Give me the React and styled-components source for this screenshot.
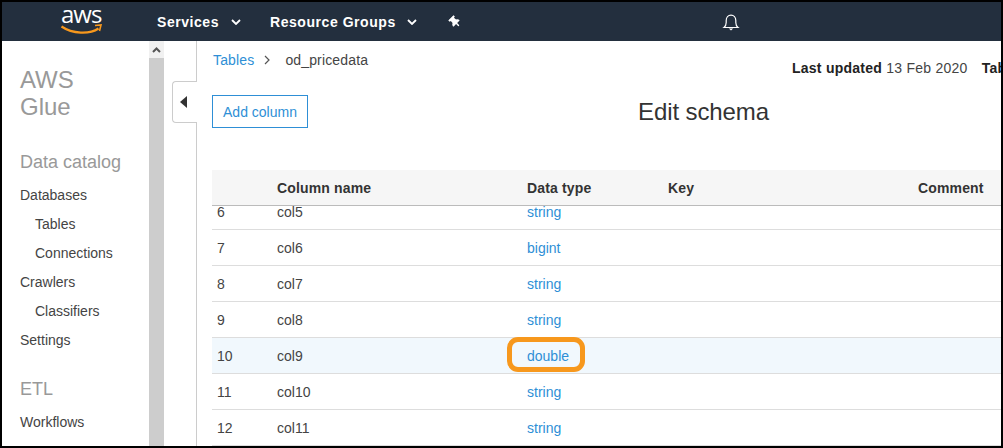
import React from "react"
import styled, { createGlobalStyle } from "styled-components"
import { FaThumbtack } from "react-icons/fa"

const GlobalStyle = createGlobalStyle`
  html, body { margin: 0; padding: 0; background: #000; }
  * { box-sizing: border-box; }
`

const Frame = styled.div`
  width: 1003px;
  height: 448px;
  border: 2px solid #000;
  display: flex;
  flex-direction: column;
  overflow: hidden;
  background: #fff;
  font-family: "Liberation Sans", Arial, sans-serif;
  font-size: 14px;
  color: #444;
`

const TopBar = styled.header`
  height: 39px;
  flex: none;
  background: #232f3e;
  display: flex;
  align-items: center;
  color: #fff;
`

const Logo = styled.div`
  position: relative;
  width: 155px;
  height: 39px;
  flex: none;
`

const LogoText = styled.span`
  position: absolute;
  left: 59px;
  top: 0;
  font-family: "Open Sans", sans-serif;
  font-size: 24px;
  line-height: 23px;
  letter-spacing: -1px;
  color: #fff;
`

const Smile = styled.svg`
  position: absolute;
  left: 58px;
  top: 22px;
`

const NavItem = styled.a`
  display: flex;
  align-items: center;
  font-weight: 700;
  font-size: 14px;
  letter-spacing: 0.55px;
  margin-right: ${(p) => p.$gap}px;
  color: #fff;
`

const Chevron = ({ ...rest }) => (
  <svg width="10" height="6" viewBox="0 0 10 6" fill="none" {...rest}>
    <path d="M1 1l4 4 4-4" stroke="#fff" strokeWidth="1.8" />
  </svg>
)

const Caret = styled(Chevron)`
  margin-left: ${(p) => p.$left}px;
`

const Pin = styled(FaThumbtack)`
  width: 12px;
  height: 12px;
  transform: rotate(-45deg);
  color: #fff;
`

const BellWrap = styled.svg`
  margin-left: 261px;
`

const Body = styled.div`
  flex: 1;
  display: flex;
  min-height: 0;
`

const Sidebar = styled.aside`
  width: 147px;
  flex: none;
  padding: 25px 0 0 18px;
  overflow: hidden;
`

const Brand = styled.div`
  font-size: 24px;
  line-height: 27px;
  color: #999;
  margin-bottom: 30px;
`

const SectionTitle = styled.div`
  font-size: 18px;
  line-height: 24px;
  color: #999;
  margin-top: ${(p) => p.$top || 0}px;
  margin-bottom: 7px;
`

const SideLink = styled.div`
  line-height: 29px;
  color: #444;
  padding-left: ${(p) => (p.$sub ? 15 : 0)}px;
`

const ScrollBar = styled.div`
  width: 15px;
  flex: none;
  background: #cdcdcd;
`

const ScrollUp = styled.div`
  height: 17px;
  background: #f1f1f1;
  display: flex;
  align-items: center;
  justify-content: center;
`

const Gutter = styled.div`
  position: relative;
  width: 33px;
  flex: none;
  border-right: 1px solid #ccc;
`

const CollapseTab = styled.div`
  position: absolute;
  left: 8px;
  top: 40px;
  width: 25px;
  height: 42px;
  background: #fff;
  border: 1px solid #ccc;
  border-right: none;
  border-radius: 4px 0 0 4px;
  display: flex;
  align-items: center;
  justify-content: center;
  padding-right: 2px;
`

const Main = styled.main`
  flex: 1;
  min-width: 0;
  padding: 9px 0 0 15px;
  overflow: hidden;
`

const TopRow = styled.div`
  display: flex;
  height: 45px;
  white-space: nowrap;
`

const Crumbs = styled.div`
  display: flex;
  align-items: center;
  height: 20px;
  width: 580px;
  flex: none;
  padding-left: 1px;
  letter-spacing: 0.15px;
`

const Link = styled.a`
  color: #2e8fd6;
`

const CrumbSep = styled.svg`
  margin: 0 14px 0 10px;
`

const Meta = styled.div`
  line-height: 20px;
  padding-top: 8px;
  font-size: 14px;
  letter-spacing: 0.25px;
  color: #444;
  b { color: #222; }
  span { margin-right: 14px; }
`

const ToolRow = styled.div`
  display: flex;
  align-items: center;
  height: 33px;
  margin-bottom: 42px;
`

const AddButton = styled.button`
  width: 96px;
  height: 33px;
  padding: 0;
  background: #fff;
  border: 1px solid #2e8fd6;
  color: #2e8fd6;
  font: inherit;
`

const Heading = styled.h1`
  margin: 0 0 0 330px;
  font-size: 24px;
  font-weight: 400;
  line-height: 28px;
  letter-spacing: -0.1px;
  color: #333;
`

const GridRow = styled.div`
  display: grid;
  grid-template-columns: 60px 250px 141px 250px 1fr;
  padding-left: 5px;
  align-items: center;
`

const HeadRow = styled(GridRow)`
  height: 36px;
  background: #f6f6f6;
  border-bottom: 1px solid #bbb;
  font-weight: 700;
  letter-spacing: 0.15px;
  color: #333;
`

const RowsClip = styled.div`
  height: 241px;
  overflow: hidden;
`

const Rows = styled.div`
  margin-top: -12px;
`

const Row = styled(GridRow)`
  position: relative;
  height: 36px;
  border-bottom: 1px solid #ddd;
  background: ${(p) => (p.$active ? "#f1f8fd" : "#fff")};
`

const Highlight = styled.span`
  position: absolute;
  left: 295px;
  top: -1px;
  width: 78px;
  height: 35px;
  border: 5px solid #f7981d;
  border-radius: 11px;
`

const sideGroups = [
  { label: "Databases" },
  { label: "Tables", sub: true },
  { label: "Connections", sub: true },
  { label: "Crawlers" },
  { label: "Classifiers", sub: true },
  { label: "Settings" },
]

const rows = [
  [6, "col5", "string"],
  [7, "col6", "bigint"],
  [8, "col7", "string"],
  [9, "col8", "string"],
  [10, "col9", "double"],
  [11, "col10", "string"],
  [12, "col11", "string"],
]

export default function App() {
  return (
    <Frame>
      <GlobalStyle />
      <TopBar>
        <Logo>
          <LogoText>aws</LogoText>
          <Smile width="42" height="12" viewBox="0 0 42 12" fill="none">
            <path d="M1.5 2.5c11 7.5 28 8 37 2" stroke="#f7981d" strokeWidth="2.2" />
            <path d="M35 1.5l6 -.5-1.5 6" stroke="#f7981d" strokeWidth="1.6" />
          </Smile>
        </Logo>
        <NavItem $gap={29}>
          Services
          <Caret $left={12} />
        </NavItem>
        <NavItem $gap={32}>
          Resource Groups
          <Caret $left={11} />
        </NavItem>
        <Pin />
        <BellWrap width="18" height="18" viewBox="0 0 18 18" fill="none">
          <path
            d="M2 14.5c1.5-1.2 2.2-2.6 2.2-5V7.5C4.2 4.6 6.2 2.2 9 2.2s4.8 2.4 4.8 5.3v2c0 2.4.7 3.8 2.2 5H2z"
            stroke="#fff"
            strokeWidth="1.2"
          />
          <path d="M6.8 15.5h4.4L9 17.5z" fill="#fff" />
        </BellWrap>
      </TopBar>
      <Body>
        <Sidebar>
          <Brand>
            AWS
            <br />
            Glue
          </Brand>
          <SectionTitle>Data catalog</SectionTitle>
          {sideGroups.map((item) => (
            <SideLink key={item.label} $sub={item.sub}>
              {item.label}
            </SideLink>
          ))}
          <SectionTitle $top={22}>ETL</SectionTitle>
          <SideLink>Workflows</SideLink>
        </Sidebar>
        <ScrollBar>
          <ScrollUp>
            <svg width="9" height="6" viewBox="0 0 9 6" fill="none">
              <path d="M1 5l3.5-3.5L8 5" stroke="#555" strokeWidth="2" />
            </svg>
          </ScrollUp>
        </ScrollBar>
        <Gutter>
          <CollapseTab>
            <svg width="8" height="12" viewBox="0 0 8 12">
              <path d="M7 0v12L0 6z" fill="#333" />
            </svg>
          </CollapseTab>
        </Gutter>
        <Main>
          <TopRow>
            <Crumbs>
              <Link>Tables</Link>
              <CrumbSep width="7" height="10" viewBox="0 0 7 10" fill="none">
                <path d="M1 1l4 4-4 4" stroke="#555" strokeWidth="1.2" />
              </CrumbSep>
              od_pricedata
            </Crumbs>
            <Meta>
              <span>
                <b>Last updated</b> 13 Feb 2020
              </span>
              <b>Table version</b>
            </Meta>
          </TopRow>
          <ToolRow>
            <AddButton>Add column</AddButton>
            <Heading>Edit schema</Heading>
          </ToolRow>
          <HeadRow>
            <span />
            <span>Column name</span>
            <span>Data type</span>
            <span>Key</span>
            <span>Comment</span>
          </HeadRow>
          <RowsClip>
            <Rows>
              {rows.map(([n, name, type]) => (
                <Row key={n} $active={n === 10}>
                  <span>{n}</span>
                  <span>{name}</span>
                  <Link>{type}</Link>
                  {n === 10 && <Highlight />}
                </Row>
              ))}
            </Rows>
          </RowsClip>
        </Main>
      </Body>
    </Frame>
  )
}
